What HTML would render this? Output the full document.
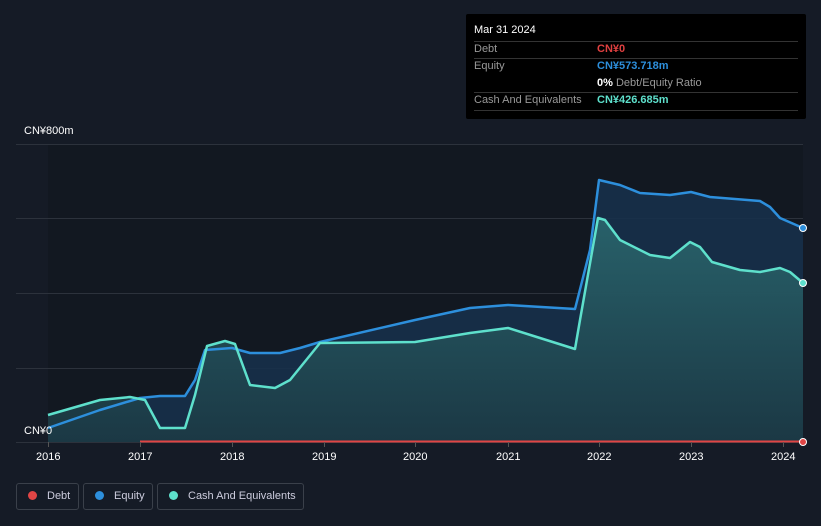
<!DOCTYPE html><html><head><style>
html,body{margin:0;width:821px;height:526px;background:#151b26;font-family:"Liberation Sans",sans-serif;overflow:hidden;position:relative}
.t{position:absolute;color:#fff;font-size:11px;white-space:nowrap}
.tip{position:absolute;left:466px;top:14px;width:340px;height:105px;background:#000;border-radius:2px}
.tip div{position:absolute;font-size:11px;white-space:nowrap}
.ln{position:absolute;left:8px;width:324px;height:1px;background:#333}
.lg{position:absolute;top:483px;height:27px;border:1px solid #3a404a;border-radius:3px;color:#ccd;font-size:11px;line-height:25px;box-sizing:border-box;white-space:nowrap}
.lg i{display:inline-block;width:9px;height:9px;border-radius:50%;margin:0 10px 0 11px;vertical-align:-1px}
</style></head><body>
<svg width="821" height="526" style="position:absolute;left:0;top:0">
<defs><linearGradient id="g" x1="0" y1="0" x2="0" y2="1"><stop offset="0" stop-color="#2b6a70"/><stop offset="1" stop-color="#1c3a44"/></linearGradient></defs>
<rect x="48" y="144" width="755" height="298" fill="#121821"/>
<g stroke="#2c323c" stroke-width="1">
<line x1="16" y1="144.5" x2="803" y2="144.5"/><line x1="16" y1="218.5" x2="803" y2="218.5"/><line x1="16" y1="293.5" x2="803" y2="293.5"/><line x1="16" y1="368.5" x2="803" y2="368.5"/><line x1="16" y1="442.5" x2="803" y2="442.5"/></g>
<path d="M48,428 L100,410 L140,398 L160,396 L185,396 L195,380 L205,350 L232,348 L250,353 L280,353 L300,348 L320,342 L415,320 L470,308 L508,305 L575,309 L590,250 L599,180 L620,185 L640,193 L670,195 L691,192 L710,197 L760,201 L770,207 L780,218 L803,228 L803,442 L48,442Z" fill="#17304a" opacity=".9"/>
<path d="M48,415 L100,400 L130,397 L145,400 L160,428 L185,428 L195,395 L207,346 L225,341 L235,344 L250,385 L275,388 L290,380 L320,343 L415,342 L470,333 L508,328 L540,338 L575,349 L580,320 L598,218 L605,220 L620,240 L650,255 L670,258 L690,242 L700,247 L712,262 L740,270 L760,272 L780,268 L790,272 L803,283 L803,442 L48,442Z" fill="url(#g)" opacity=".85"/>
<path d="M48,428 L100,410 L140,398 L160,396 L185,396 L195,380 L205,350 L232,348 L250,353 L280,353 L300,348 L320,342 L415,320 L470,308 L508,305 L575,309 L590,250 L599,180 L620,185 L640,193 L670,195 L691,192 L710,197 L760,201 L770,207 L780,218 L803,228" fill="none" stroke="#2d8fdc" stroke-width="2.5" stroke-linejoin="round"/>
<path d="M48,415 L100,400 L130,397 L145,400 L160,428 L185,428 L195,395 L207,346 L225,341 L235,344 L250,385 L275,388 L290,380 L320,343 L415,342 L470,333 L508,328 L540,338 L575,349 L580,320 L598,218 L605,220 L620,240 L650,255 L670,258 L690,242 L700,247 L712,262 L740,270 L760,272 L780,268 L790,272 L803,283" fill="none" stroke="#5ee0cc" stroke-width="2.5" stroke-linejoin="round"/>
<line x1="140" y1="441.5" x2="803" y2="441.5" stroke="#e04545" stroke-width="2"/>
<circle cx="803" cy="228" r="3.5" fill="#2d8fdc" stroke="#fff" stroke-width="1"/>
<circle cx="803" cy="283" r="3.5" fill="#5ee0cc" stroke="#fff" stroke-width="1"/>
<circle cx="803" cy="442" r="3.5" fill="#e04545" stroke="#fff" stroke-width="1"/>
<g stroke="#555" stroke-width="1"><line x1="48.5" y1="442" x2="48.5" y2="447"/><line x1="140.5" y1="442" x2="140.5" y2="447"/><line x1="232.5" y1="442" x2="232.5" y2="447"/><line x1="324.5" y1="442" x2="324.5" y2="447"/><line x1="415.5" y1="442" x2="415.5" y2="447"/><line x1="508.5" y1="442" x2="508.5" y2="447"/><line x1="599.5" y1="442" x2="599.5" y2="447"/><line x1="691.5" y1="442" x2="691.5" y2="447"/><line x1="783.5" y1="442" x2="783.5" y2="447"/></g>
</svg>
<div class="t" style="left:24px;top:125px">CN¥800m</div>
<div class="t" style="left:24px;top:425px">CN¥0</div>
<div class="t" style="left:36px;top:451px">2016</div><div class="t" style="left:128px;top:451px">2017</div><div class="t" style="left:220px;top:451px">2018</div><div class="t" style="left:312px;top:451px">2019</div><div class="t" style="left:403px;top:451px">2020</div><div class="t" style="left:496px;top:451px">2021</div><div class="t" style="left:587px;top:451px">2022</div><div class="t" style="left:679px;top:451px">2023</div><div class="t" style="left:771px;top:451px">2024</div>
<div class="tip">
<div style="left:8px;top:10px;color:#fff">Mar 31 2024</div>
<div class="ln" style="top:27px"></div>
<div style="left:8px;top:29px;color:#999">Debt</div><div style="left:131px;top:29px;color:#e04040;font-weight:bold">CN¥0</div>
<div class="ln" style="top:44px"></div>
<div style="left:8px;top:46px;color:#999">Equity</div><div style="left:131px;top:46px;color:#2d8fdc;font-weight:bold">CN¥573.718m</div>
<div style="left:131px;top:63px;color:#999"><b style="color:#fff">0%</b> Debt/Equity Ratio</div>
<div class="ln" style="top:78px"></div>
<div style="left:8px;top:80px;color:#999">Cash And Equivalents</div><div style="left:131px;top:80px;color:#5ee0cc;font-weight:bold">CN¥426.685m</div>
<div class="ln" style="top:96px"></div>
</div>
<div class="lg" style="left:16px;width:63px"><i style="background:#e04545"></i>Debt</div>
<div class="lg" style="left:83px;width:70px"><i style="background:#2d8fdc"></i>Equity</div>
<div class="lg" style="left:157px;width:147px"><i style="background:#5ee0cc"></i>Cash And Equivalents</div>
</body></html>
